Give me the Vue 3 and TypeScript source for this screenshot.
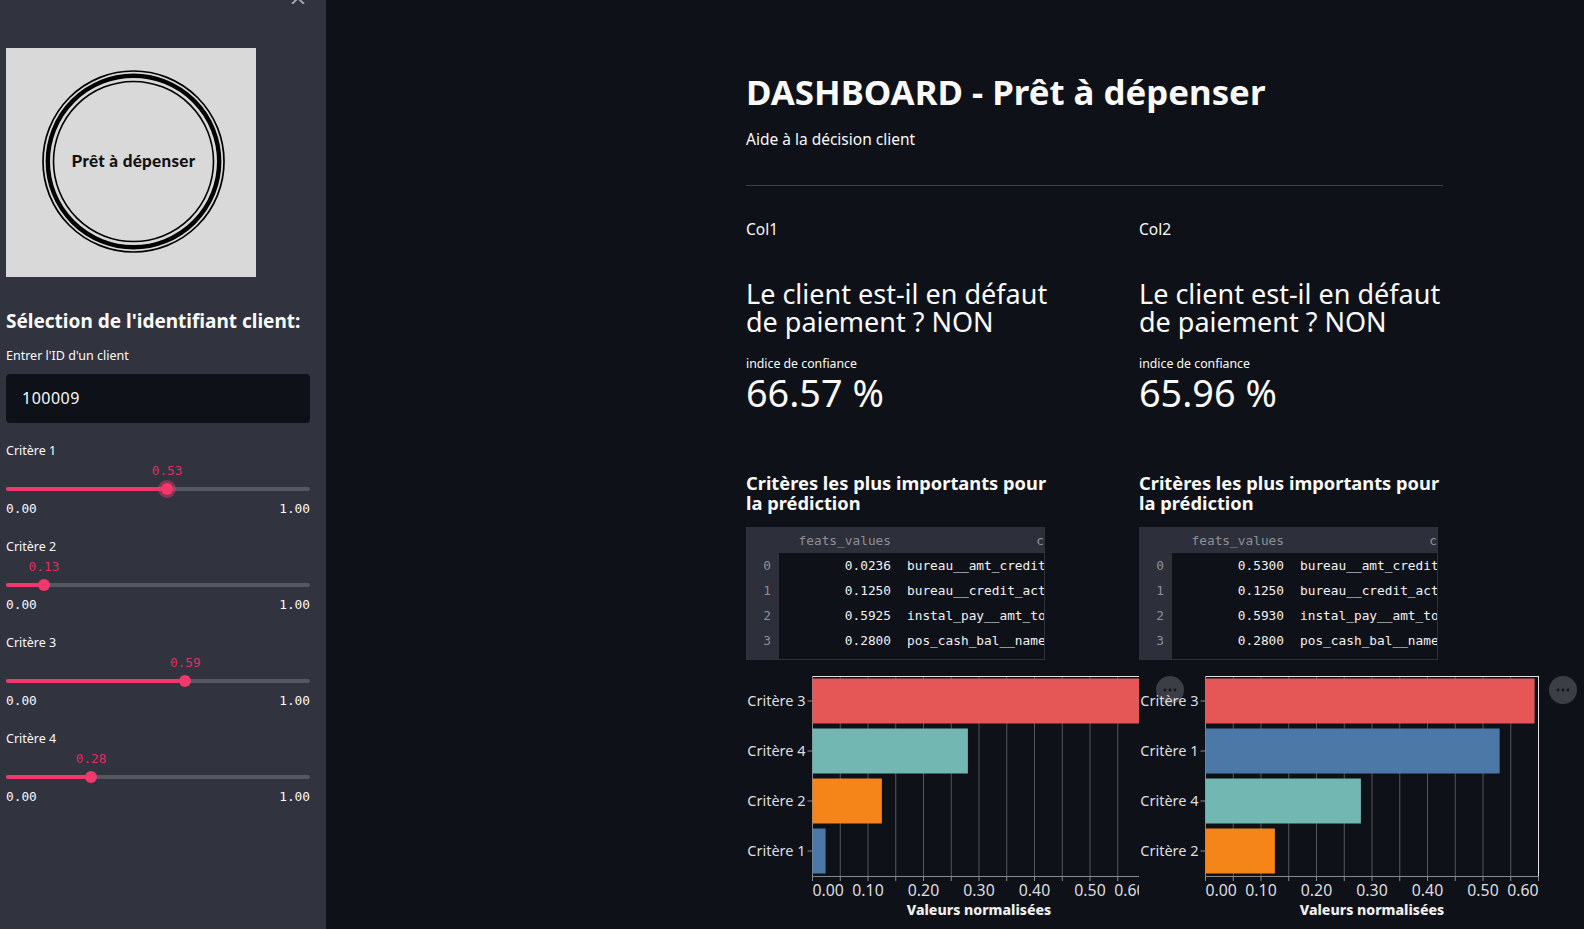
<script setup lang="ts">
interface Bar {
  label: string
  value: number
  color: string
}

interface Column {
  name: string
  score: string
  rows: [string, string][]
  bars: Bar[]
}

const sliders = [
  { label: 'Critère 1', value: 0.53, active: true },
  { label: 'Critère 2', value: 0.125, text: '0.13' },
  { label: 'Critère 3', value: 0.59 },
  { label: 'Critère 4', value: 0.28 },
]

const red = '#e45756'
const blue = '#4c78a8'
const teal = '#72b7b2'
const orange = '#f58518'

const columns: Column[] = [
  {
    name: 'Col1',
    score: '66.57 %',
    rows: [
      ['0.0236', 'bureau__amt_credit'],
      ['0.1250', 'bureau__credit_act'],
      ['0.5925', 'instal_pay__amt_to'],
      ['0.2800', 'pos_cash_bal__name'],
    ],
    bars: [
      { label: 'Critère 3', value: 0.5925, color: red },
      { label: 'Critère 4', value: 0.28, color: teal },
      { label: 'Critère 2', value: 0.125, color: orange },
      { label: 'Critère 1', value: 0.0236, color: blue },
    ],
  },
  {
    name: 'Col2',
    score: '65.96 %',
    rows: [
      ['0.5300', 'bureau__amt_credit'],
      ['0.1250', 'bureau__credit_act'],
      ['0.5930', 'instal_pay__amt_to'],
      ['0.2800', 'pos_cash_bal__name'],
    ],
    bars: [
      { label: 'Critère 3', value: 0.593, color: red },
      { label: 'Critère 1', value: 0.53, color: blue },
      { label: 'Critère 4', value: 0.28, color: teal },
      { label: 'Critère 2', value: 0.125, color: orange },
    ],
  },
]

const plotLeft = 66.5
const plotWidth = 333
const scale = plotWidth / 0.6
const grid = Array.from({ length: 13 }, (_, i) => plotLeft + (plotWidth / 12) * i)
const axisLabels = [
  { text: '0.00', x: plotLeft, anchor: 'start' },
  { text: '0.10', x: plotLeft + 55.5, anchor: 'middle' },
  { text: '0.20', x: plotLeft + 111, anchor: 'middle' },
  { text: '0.30', x: plotLeft + 166.5, anchor: 'middle' },
  { text: '0.40', x: plotLeft + 222, anchor: 'middle' },
  { text: '0.50', x: plotLeft + 277.5, anchor: 'middle' },
  { text: '0.60', x: plotLeft + plotWidth, anchor: 'end' },
]

function thumbLeft(value: number): string {
  return `${value * 100}%`
}
</script>

<template>
  <div class="app">
    <aside class="sidebar">
      <svg class="close" width="16" height="4" viewBox="0 0 16 4">
        <path d="M2 4 L8 -2 L14 4" fill="none" stroke="#a3a4aa" stroke-width="2" />
      </svg>
      <div class="logo">
        <svg width="250" height="229" viewBox="0 0 250 229">
          <circle cx="127.5" cy="113.5" r="90.5" fill="none" stroke="#000" stroke-width="1.7" />
          <circle cx="127.5" cy="113.5" r="85.7" fill="none" stroke="#000" stroke-width="4.4" />
          <circle cx="127.5" cy="113.5" r="80" fill="none" stroke="#000" stroke-width="1.6" />
          <text x="127.5" y="119" text-anchor="middle" class="logo-text">Prêt à dépenser</text>
        </svg>
      </div>
      <h2 class="side-title">Sélection de l'identifiant client:</h2>
      <label class="field-label">Entrer l'ID d'un client</label>
      <div class="input">100009</div>
      <div v-for="slider in sliders" :key="slider.label" class="slider">
        <div class="field-label">{{ slider.label }}</div>
        <div class="track-wrap">
          <div class="track" />
          <div class="fill" :style="{ width: thumbLeft(slider.value) }" />
          <div class="thumb" :class="{ active: slider.active }" :style="{ left: thumbLeft(slider.value) }" />
          <div class="current" :style="{ left: thumbLeft(slider.value) }">
            {{ slider.text ?? slider.value.toFixed(2) }}
          </div>
        </div>
        <div class="bounds">
          <span>0.00</span>
          <span>1.00</span>
        </div>
      </div>
    </aside>

    <main class="main">
      <div class="block">
        <h1 class="title">DASHBOARD - Prêt à dépenser</h1>
        <p class="subtitle">Aide à la décision client</p>
        <hr class="rule">
        <div class="cols">
          <section v-for="col in columns" :key="col.name" class="col">
            <div class="col-name">{{ col.name }}</div>
            <h2 class="question">Le client est-il en défaut de paiement ? NON</h2>
            <div class="metric-label">indice de confiance</div>
            <div class="metric">{{ col.score }}</div>
            <h3 class="criteria">Critères les plus importants pour la prédiction</h3>
            <div class="table-shell">
              <table class="table">
                <thead>
                  <tr>
                    <th class="idx" />
                    <th class="num">feats_values</th>
                    <th class="name">c</th>
                  </tr>
                </thead>
                <tbody>
                  <tr v-for="(row, i) in col.rows" :key="i">
                    <th class="idx">{{ i }}</th>
                    <td class="num">{{ row[0] }}</td>
                    <td class="name">{{ row[1] }}</td>
                  </tr>
                  <tr class="spacer">
                    <th class="idx" />
                    <td />
                    <td />
                  </tr>
                </tbody>
              </table>
            </div>
            <div class="chart">
              <button class="more" type="button">
                <svg width="14" height="4" viewBox="0 0 14 4">
                  <circle cx="2" cy="2" r="1.4" />
                  <circle cx="7" cy="2" r="1.4" />
                  <circle cx="12" cy="2" r="1.4" />
                </svg>
              </button>
              <svg class="plot" height="253">
                <line
                  v-for="x in grid"
                  :key="x"
                  :x1="x"
                  :x2="x"
                  y1="0"
                  y2="200"
                  stroke="#55575e"
                />
                <line v-for="x in grid" :key="`t${x}`" :x1="x" :x2="x" y1="200" y2="205" stroke="#888a90" />
                <line :x1="plotLeft" :x2="plotLeft + plotWidth" y1="0.5" y2="0.5" stroke="#e4e4e4" />
                <line :x1="plotLeft + plotWidth" :x2="plotLeft + plotWidth" y1="0" y2="200" stroke="#e4e4e4" />
                <line :x1="plotLeft" :x2="plotLeft + plotWidth" y1="200.5" y2="200.5" stroke="#888a90" />
                <line :x1="plotLeft" :x2="plotLeft" y1="0" y2="205" stroke="#888a90" />
                <g v-for="(bar, i) in col.bars" :key="bar.label">
                  <line :x1="plotLeft - 5" :x2="plotLeft" :y1="25 + i * 50" :y2="25 + i * 50" stroke="#888a90" />
                  <rect :x="plotLeft" :y="2.5 + i * 50" :width="bar.value * scale" height="45" :fill="bar.color" />
                  <text :x="plotLeft - 7" :y="30 + i * 50" text-anchor="end" class="tick">{{ bar.label }}</text>
                </g>
                <text
                  v-for="label in axisLabels"
                  :key="label.text"
                  :x="label.x"
                  y="220"
                  :text-anchor="label.anchor"
                  class="tick num-tick"
                >{{ label.text }}</text>
                <text x="233" y="239" text-anchor="middle" class="axis-title">Valeurs normalisées</text>
              </svg>
            </div>
          </section>
        </div>
      </div>
    </main>
  </div>
</template>

<style>
html,
body {
  margin: 0;
  background: #0e1117;
  overflow: hidden;
}
</style>

<style scoped>
.app {
  display: flex;
  height: 929px;
  overflow: hidden;
  background: #0e1117;
  color: #fafafa;
  font-family: "Noto Sans", "Liberation Sans", sans-serif;
}

.sidebar {
  position: relative;
  flex: 0 0 326px;
  box-sizing: border-box;
  padding: 48px 16px 0 6px;
  background: #31333f;
}

.close {
  position: absolute;
  top: 0;
  left: 290px;
}

.logo {
  width: 250px;
  height: 229px;
  background: #d9d9d9;
}

.logo svg {
  display: block;
}

.logo-text {
  font-family: Lato, sans-serif;
  font-size: 17px;
  font-weight: 900;
  letter-spacing: 0.3px;
  fill: #111;
}

.side-title {
  margin: 32px 0 10px;
  font-size: 19px;
  line-height: 24px;
  font-weight: 700;
}

.field-label {
  font-size: 12.5px;
  line-height: 18px;
}

.input {
  box-sizing: border-box;
  height: 49px;
  margin-top: 9px;
  padding: 0 16px;
  border-radius: 4px;
  background: #0e1117;
  font-size: 16px;
  letter-spacing: 0.5px;
  line-height: 48px;
}

.slider {
  height: 96px;
}

.input + .slider {
  margin-top: 19px;
}

.track-wrap {
  position: relative;
  height: 5px;
  margin-top: 27px;
}

.track,
.fill {
  position: absolute;
  top: 0;
  left: 0;
  height: 4px;
  border-radius: 2px;
}

.track {
  right: 0;
  background: #555761;
}

.fill {
  background: #f0386b;
}

.thumb {
  position: absolute;
  top: 2px;
  width: 12px;
  height: 12px;
  border-radius: 50%;
  background: #f0386b;
  transform: translate(-50%, -50%);
}

.thumb.active {
  box-shadow: 0 0 0 3px rgba(240, 56, 107, 0.45);
}

.current {
  position: absolute;
  top: -25px;
  color: #dc3163;
  font-family: "DejaVu Sans Mono", monospace;
  font-size: 12.8px;
  line-height: 18px;
  transform: translateX(-50%);
}

.bounds {
  display: flex;
  justify-content: space-between;
  margin-top: 8px;
  font-family: "DejaVu Sans Mono", monospace;
  font-size: 12.8px;
  line-height: 18px;
}

.main {
  flex: 1;
  min-width: 0;
}

.block {
  width: 697px;
  margin-left: 420px;
  padding-top: 69px;
}

.title {
  margin: 0;
  font-size: 34.8px;
  line-height: 46px;
  font-weight: 700;
}

.subtitle {
  margin: 12px 0 0;
  font-size: 15.5px;
  line-height: 24px;
}

.rule {
  height: 1px;
  margin: 34px 0 0;
  border: 0;
  background: #3d3f49;
}

.cols {
  display: grid;
  grid-template-columns: 376px 376px;
  gap: 17px;
  margin-top: 31px;
}

.col {
  position: relative;
  min-width: 0;
}

.col-name {
  font-size: 15.5px;
  line-height: 24px;
}

.question {
  width: 304px;
  margin: 39px 0 0;
  font-size: 27px;
  font-weight: 400;
  line-height: 28px;
}

.metric-label {
  margin-top: 19px;
  font-size: 12.3px;
  line-height: 18px;
}

.metric {
  font-size: 37.8px;
  line-height: 40px;
}

.criteria {
  width: 304px;
  margin: 60px 0 0;
  font-size: 18.3px;
  font-weight: 700;
  line-height: 20px;
}

.table-shell {
  width: 299px;
  height: 133px;
  margin-top: 14px;
  overflow: hidden;
  background: #0e1117;
  border-right: 1px solid #30323b;
  border-bottom: 1px solid #30323b;
  box-sizing: border-box;
}

.table {
  width: 298px;
  border-collapse: collapse;
  table-layout: fixed;
  color: #f2f2f3;
  font-family: "DejaVu Sans Mono", monospace;
  font-size: 12.8px;
  font-weight: 400;
}

.table thead tr {
  height: 26px;
  background: #2d2f3a;
}

.table tbody tr {
  height: 25px;
}

.table tbody tr.spacer {
  height: 6px;
}

.table th,
.table td {
  padding: 0;
  overflow: hidden;
  font-weight: 400;
  white-space: nowrap;
}

.idx {
  width: 33px;
  padding-right: 8px !important;
  box-sizing: border-box;
  background: #2d2f3a;
  color: #8e9099;
  text-align: right;
}

.num {
  width: 124px;
  padding-right: 12px !important;
  box-sizing: border-box;
  text-align: right;
}

.name {
  padding-left: 4px !important;
  text-align: left;
}

thead .num,
thead .name {
  color: #8e9099;
}

thead .name {
  padding-left: 0 !important;
  text-align: right;
}

.chart {
  position: relative;
  margin-top: 16px;
}

.plot {
  position: relative;
  display: block;
  width: 402px;
  overflow: hidden;
}

.col:first-child .plot {
  width: 393px;
}

.more {
  position: absolute;
  top: 0;
  left: 410px;
  display: flex;
  align-items: center;
  justify-content: center;
  width: 28px;
  height: 28px;
  padding: 0;
  border: 0;
  border-radius: 50%;
  background: #3c3e45;
  fill: #14161c;
}

.tick {
  font-family: "Noto Sans", sans-serif;
  font-size: 14.5px;
  fill: #dedee0;
}

.num-tick {
  font-size: 15.8px;
}

.axis-title {
  font-family: "Noto Sans", sans-serif;
  font-size: 14.1px;
  font-weight: 800;
  fill: #f0f0f0;
}
</style>
